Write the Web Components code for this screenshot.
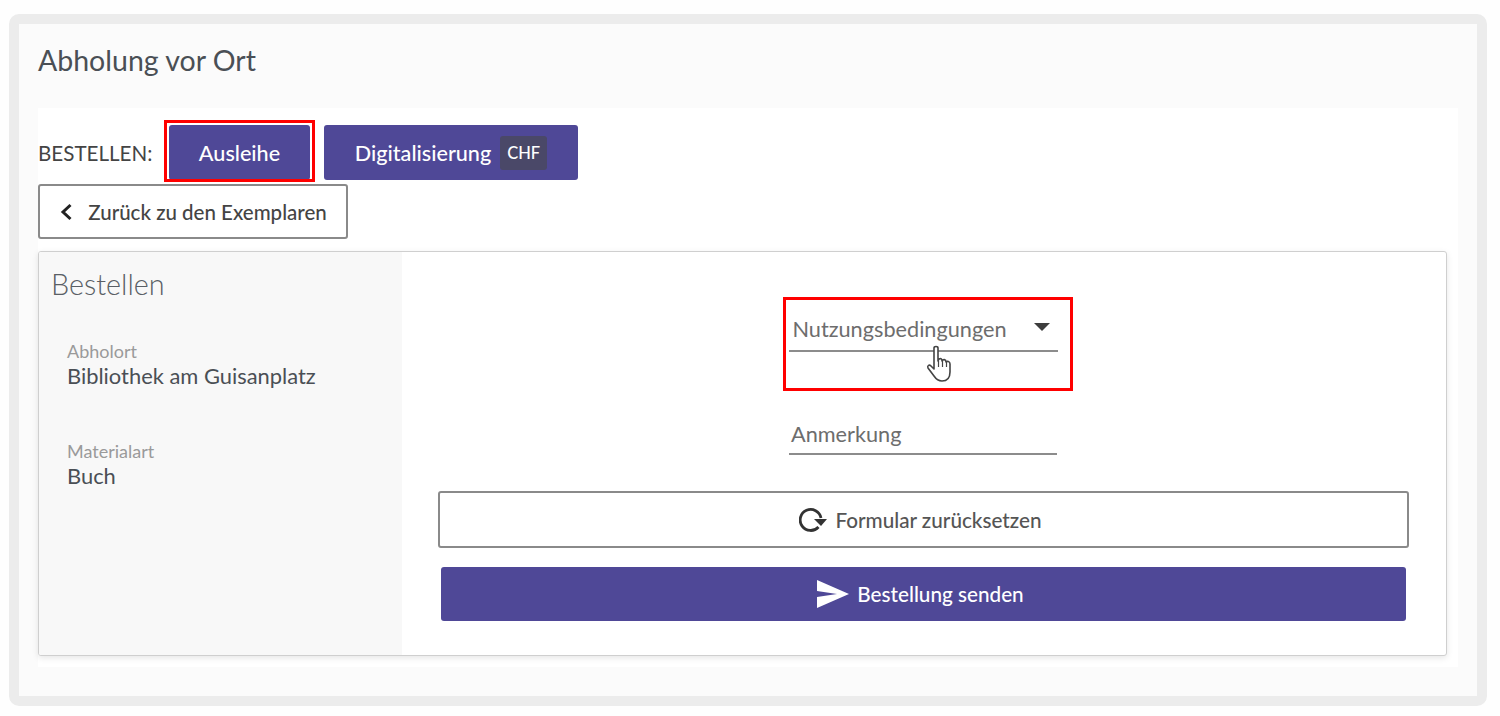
<!DOCTYPE html>
<html lang="de">
<head>
<meta charset="utf-8">
<title>Abholung vor Ort</title>
<style>
  html, body { margin: 0; background: #fefefe; }
  body { font-family: "Lato", "Liberation Sans", sans-serif; color: #444; }
</style>
</head>
<body>
<template id="t-frame">
  <style>
    :host { display: block; box-sizing: border-box; width: 1478px; height: 692px; margin: 14px 0 0 9px;
      border: 10px solid #ececec; border-radius: 10px; background: #fbfbfb; padding: 0 19px; }
    .title { height: 84px; display: flex; align-items: center; font-size: 28.5px; color: #4a4f55; padding-bottom: 12px; box-sizing: border-box; }
    .body { background: #fff; height: 559px; padding-top: 17px; box-sizing: border-box; }
  </style>
  <div class="title"><slot name="title"></slot></div>
  <div class="body"><slot></slot></div>
</template>

<template id="t-btn">
  <style>
    :host { display: inline-flex; position: relative; box-sizing: border-box; align-items: center; justify-content: center; gap: 10px;
      height: 55px; border-radius: 3px; font-size: 21.6px; background: #4f4897; color: #fff; font-weight: 500; }
    :host([outline]) { background: #fff; color: #444; border: 2px solid #8a8a8a; }
    :host([marked])::after { content: ""; position: absolute; inset: -5px -5px -2px; border: 3px solid #f00; }
    ::slotted(svg) { flex: none; }
  </style>
  <slot></slot>
</template>

<template id="t-field">
  <style>
    :host { display: block; position: relative; width: 268px; border-bottom: 2px solid #8c8c8c; box-sizing: border-box; color: #6d6d6d; font-size: 21.7px; }
    .label { display: flex; justify-content: space-between; align-items: center; height: 26px; padding: 0 8px 6px 2px; }
    :host([select]) .label { padding: 0 8px 8px 4px; }
    .arrow { width: 0; height: 0; border: 8px solid transparent; border-top-color: #3d3d3d; border-bottom: 0; margin: 0 0 5px; }
    :host(:not([select])) .arrow { display: none; }
    .mark { position: absolute; left: -6px; bottom: -41px; width: 290px; height: 94px; box-sizing: border-box; border: 3px solid #f00; display: none; }
    :host([marked]) .mark { display: block; }
  </style>
  <div class="label"><slot></slot><span class="arrow"></span></div>
  <div class="mark"></div>
  <slot name="cursor"></slot>
</template>

<template id="t-info">
  <style>
    :host { display: block; padding-left: 28px; }
    .k { font-size: 18px; color: #9a9a9a; line-height: 22px; }
    .v { font-size: 21.9px; color: #4a4f55; line-height: 28px; }
  </style>
  <div class="k"><slot name="k"></slot></div>
  <div class="v"><slot></slot></div>
</template>

<template id="t-card">
  <style>
    :host { display: flex; box-sizing: border-box; width: 1409px; height: 405px; margin-top: 12px;
      border: 1px solid #cfcfcf; border-radius: 3px; box-shadow: 0 2px 6px rgba(0,0,0,.1); overflow: hidden; background: #fff; }
    aside { width: 363px; flex: none; background: #f8f8f8; box-sizing: border-box; padding: 13px 12px; }
    h2 { margin: 0 0 37px; font-size: 28.8px; line-height: 38px; font-weight: 300; color: #5a5f65; }
    .items { display: flex; flex-direction: column; gap: 50px; margin-left: -12px; }
    main { flex: 1; display: flex; flex-direction: column; align-items: center; padding: 64px 0 0; box-sizing: border-box; }
  </style>
  <aside><h2><slot name="heading"></slot></h2><div class="items"><slot name="info"></slot></div></aside>
  <main><slot></slot></main>
</template>

<script>
  function reg(name, tpl) {
    customElements.define(name, class extends HTMLElement {
      constructor() {
        super();
        this.attachShadow({ mode: "open" }).appendChild(document.getElementById(tpl).content.cloneNode(true));
      }
    });
  }
  reg("page-frame", "t-frame");
  reg("ui-btn", "t-btn");
  reg("form-field", "t-field");
  reg("info-item", "t-info");
  reg("order-card", "t-card");
</script>

<page-frame>
  <span slot="title">Abholung vor Ort</span>
  <div style="display:flex;align-items:center;height:55px">
    <span style="font-size:20.6px;color:#444;width:131px">BESTELLEN:</span>
    <ui-btn marked style="width:141px">Ausleihe</ui-btn>
    <ui-btn style="width:254px;margin-left:14px;gap:9px">Digitalisierung <span style="background:#4a4868;border-radius:3px;font-size:16.5px;padding:7px;line-height:20px">CHF</span></ui-btn>
  </div>
  <ui-btn outline style="width:310px;margin-top:4px;font-size:20.5px;gap:15px;display:flex">
    <svg width="14" height="18" viewBox="0 0 14 18"><path d="M11.5 2 4 9l7.5 7" fill="none" stroke="#222" stroke-width="3"/></svg>
    Zurück zu den Exemplaren
  </ui-btn>
  <order-card>
    <span slot="heading">Bestellen</span>
    <info-item slot="info"><span slot="k">Abholort</span>Bibliothek am Guisanplatz</info-item>
    <info-item slot="info"><span slot="k">Materialart</span>Buch</info-item>
    <form-field select marked style="margin-left:-2px;width:269px">Nutzungsbedingungen
      <svg slot="cursor" style="position:absolute;left:136px;bottom:-32px" width="28" height="37" viewBox="0 0 26 37"><path d="M8 3c0-2 4-2 4 0v13l1-2c2-1 3 0 3 2 1-2 4-2 4 1 1-1 4-1 4 2v8c0 6-3 9-8 9-4 0-6-2-8-5l-6-8c-1-2 1-4 3-2l3 3z" fill="#fff" stroke="#444" stroke-width="1.6" stroke-linejoin="round"/><path d="M12.5 16v6M16.5 16v6M20.5 17v5" fill="none" stroke="#444" stroke-width="1.2"/></svg>
    </form-field>
    <form-field style="margin-top:69px;margin-left:-2px">Anmerkung</form-field>
    <ui-btn outline style="width:971px;height:57px;margin-top:36px;margin-left:-2px;font-size:20.7px;gap:7px;background:#fff;color:#555;padding-right:5px">
      <svg width="29" height="26" viewBox="0 0 29 26"><path d="M19.5 20A10.5 10.5 0 1 1 22 11" fill="none" stroke="#333" stroke-width="2.8"/><path d="M15 12h13l-6 7z" fill="#333"/></svg>
      Formular zurücksetzen
    </ui-btn>
    <ui-btn style="width:965px;height:54px;margin-top:19px;margin-left:-2px;gap:8px;font-size:20.7px;padding-right:5px">
      <svg width="32" height="28" viewBox="0 0 32 28"><path d="M0 0 32 14 0 28V17L20 14 0 11z" fill="#fff"/></svg>
      Bestellung senden
    </ui-btn>
  </order-card>
</page-frame>
</body>
</html>
